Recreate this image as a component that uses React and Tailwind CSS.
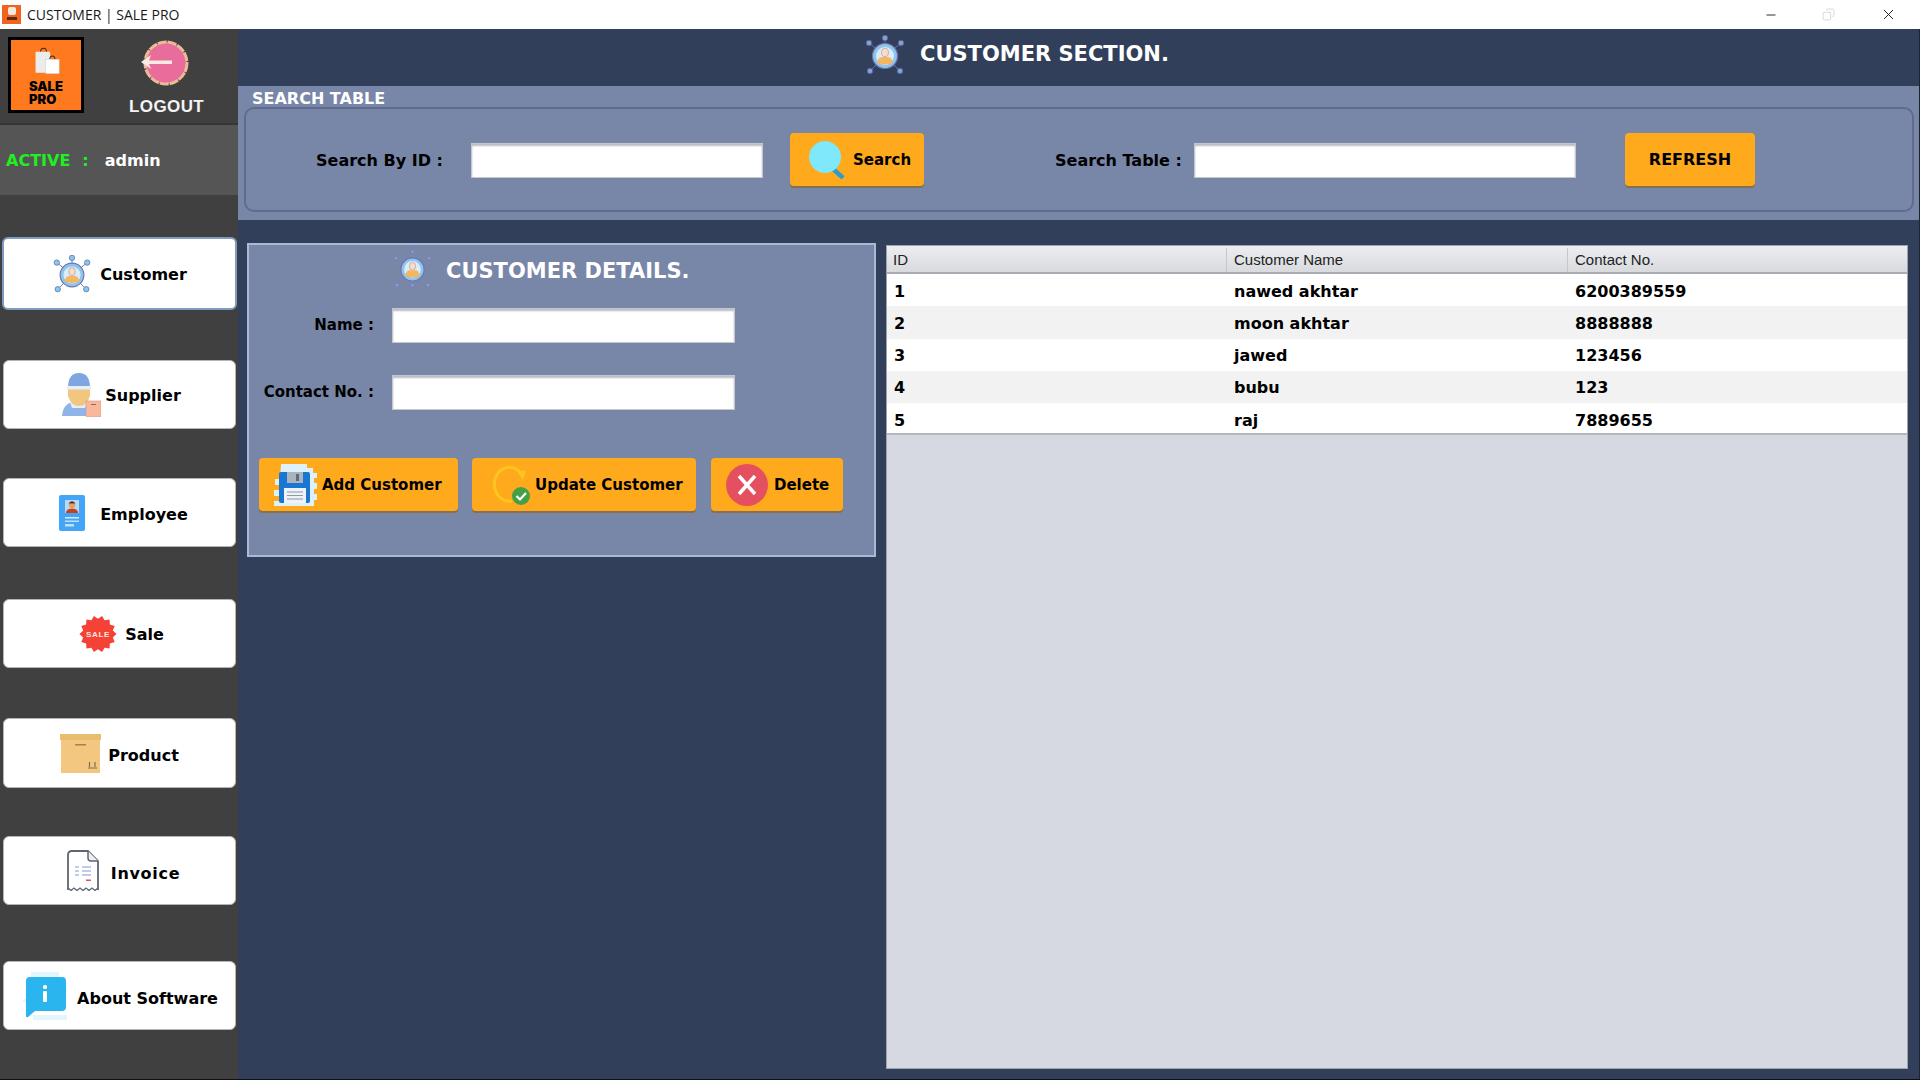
import { Minus, Copy, X } from 'lucide-react';

const ROWS = [
  { id: '1', name: 'nawed akhtar', contact: '6200389559' },
  { id: '2', name: 'moon akhtar', contact: '8888888' },
  { id: '3', name: 'jawed', contact: '123456' },
  { id: '4', name: 'bubu', contact: '123' },
  { id: '5', name: 'raj', contact: '7889655' },
];

const burst = Array.from({ length: 28 }, (_, i) => {
  const r = i % 2 ? 16 : 19.5;
  const a = (i / 28) * Math.PI * 2;
  return `${(20 + r * Math.cos(a)).toFixed(1)},${(20 + r * Math.sin(a)).toFixed(1)}`;
}).join(' ');

function HubIcon({ className, lines = true, dot = '#8ec5ea', edge = '#5e86b8' }) {
  const sats = lines
    ? [[20, 3], [4, 8], [36, 8], [5, 36], [35, 36]]
    : [[20, 2], [2, 9], [38, 9], [3, 38], [37, 38], [20, 38]];
  return (
    <svg viewBox="0 0 40 40" className={className}>
      {lines && sats.map(([x, y]) => <line key={x} x1="20" y1="21" x2={x} y2={y} stroke="#6d6db5" strokeWidth="1" />)}
      {sats.map(([x, y]) => <circle key={x} cx={x} cy={y} r={lines ? 2.8 : 1.6} fill={dot} stroke={edge} strokeWidth={lines ? 1 : 0.4} />)}
      <circle cx="20" cy="21" r="12.5" fill="#8ec5ea" stroke="#6f72b5" strokeWidth="1.2" />
      <circle cx="20" cy="21" r="9" fill="#d9ecf9" />
      <ellipse cx="20" cy="17.5" rx="3.4" ry="4.2" fill="#f8dcc9" stroke="#a77" strokeWidth="0.5" />
      <path d="M12.5 28 q0-6 5-6 l5 0 q5 0 5 6 q-7.500 3-15 0z" fill="#f4b75f" />
    </svg>
  );
}

function SupplierIcon() {
  return (
    <svg viewBox="0 0 40 45" className="w-[40px] h-[45px]">
      <path d="M1 44 q1-13 12-14 l10 0 q8 1 10 14z" fill="#8fb5e8" />
      <path d="M9 30 h17 l-2 6 h-13z" fill="#e4effb" />
      <path d="M7 17 h22 v7 q-3 10-11 10 q-8 0-11-10z" fill="#f1c67f" />
      <path d="M7 16 q0-15 11-15 q11 0 11 15z" fill="#7fa6e0" />
      <rect x="6" y="14" width="24" height="3.500" fill="#e4effb" />
      <rect x="25" y="29" width="15" height="15.500" fill="#f9b89c" stroke="#c99a80" strokeWidth="0.6" />
      <rect x="30" y="32" width="5" height="1" fill="#a8614a" />
    </svg>
  );
}

function EmployeeIcon() {
  return (
    <svg viewBox="0 0 27 36" className="w-[27px] h-[36px]">
      <rect width="26" height="36" rx="2" fill="#42a5f5" />
      <rect x="6" y="5" width="14" height="13" fill="#b6d9f7" />
      <circle cx="13" cy="10" r="3.200" fill="#e6a05a" />
      <path d="M9.500 8.500 q3.500-4.500 7 0z" fill="#4b3a34" />
      <path d="M7 18 q0-4.500 6-4.500 q6 0 6 4.500z" fill="#c9401f" />
      <rect x="6" y="22" width="14" height="1.500" fill="#d6ebfb" />
      <rect x="6" y="25.500" width="14" height="1.500" fill="#bfe0f9" />
      <rect x="6" y="29" width="9" height="2.500" fill="#bfe0f9" />
    </svg>
  );
}

function SaleIcon() {
  return (
    <svg viewBox="0 0 40 40" className="w-[38px] h-[38px]">
      <polygon points={burst} fill="#f44336" />
      <text x="20" y="23.500" textAnchor="middle" fontSize="8.500" fontFamily="Liberation Sans" fill="#ffe3df" letterSpacing="0.6">SALE</text>
    </svg>
  );
}

function BoxIcon() {
  return (
    <svg viewBox="0 0 41 39" className="w-[41px] h-[39px]">
      <rect x="1" y="5" width="39" height="34" fill="#f3c77f" />
      <rect width="41" height="6" fill="#eabc6e" />
      <rect x="15" y="10" width="11" height="1.500" fill="#a98246" />
      <path d="M28 34 h9 M29.500 33 v-5 M35 33 v-5" stroke="#7f6f50" strokeWidth="1.200" fill="none" />
    </svg>
  );
}

function InvoiceIcon() {
  return (
    <svg viewBox="0 0 32 41" className="w-[32px] h-[41px]">
      <path d="M1 40 V5 q0-4 4-4 H21 L31 11 V40" fill="#fff" stroke="#5f6672" strokeWidth="1.800" />
      <path d="M21 1 v7 q0 3 3 3 h7" fill="#eef0f3" stroke="#5f6672" strokeWidth="1.500" />
      <path d="M8 17 h4 M15 17 h9 M8 21 h4 M15 21 h9 M8 25 h4 M15 25 h9" stroke="#a9bedb" strokeWidth="1.500" />
      <rect x="19" y="29.500" width="5" height="1.500" fill="#e0526a" />
      <path d="M1 38 l3 2.500 3-2.500 3 2.500 3-2.500 3 2.500 3-2.500 3 2.500 3-2.500 3 2.500 3-2.500" fill="none" stroke="#5f6672" strokeWidth="1.300" />
    </svg>
  );
}

function AboutIcon() {
  return (
    <svg viewBox="0 0 48 50" className="w-[48px] h-[50px]">
      <rect x="2" y="28" width="6" height="3" fill="#e3f6fd" />
      <rect x="40" y="18" width="6" height="4" fill="#e3f6fd" />
      <rect x="10" y="1" width="28" height="5" fill="#e3f6fd" />
      <rect x="12" y="44" width="34" height="5" fill="#e3f6fd" />
      <path d="M5 10 q0-4 4-4 H41 q4 0 4 4 V36 q0 4-4 4 H14 L7 46 q-2 1-2-1z" fill="#2bb5ee" />
      <rect x="22" y="14" width="4" height="4" rx="1.500" fill="#fff" />
      <rect x="22" y="20" width="4" height="11" rx="1" fill="#fff" />
    </svg>
  );
}

function LogoutIcon() {
  return (
    <svg viewBox="0 0 50 46" className="w-[50px] h-[46px] mt-[3px] -ml-[3px]">
      <circle cx="26" cy="23" r="21" fill="#e96d9b" stroke="#e9bb97" strokeWidth="3" strokeDasharray="9 1" />
      <path d="M1 22 L11 15 L9 20.500 H32 V24 H9 L11 29z" fill="#fbe9e3" />
    </svg>
  );
}

function LogoMark() {
  return (
    <div className="w-[76px] h-[76px] shrink-0 bg-[#ff7a1f] border-[3px] border-black pl-[18px] pt-[7px]">
      <svg viewBox="0 0 32 32" className="w-[27px] h-[28px] ml-[4px]">
        <path d="M9 5 q0-4 3.500-4 q3.500 0 3.500 4" fill="none" stroke="#3a2a1a" strokeWidth="1.200" />
        <path d="M3 5 h17 l3 25 h-20z" fill="#ececec" />
        <path d="M20 14 q0-4 3-4 q3 0 3 4" fill="none" stroke="#3a2a1a" strokeWidth="1.200" />
        <rect x="15" y="14" width="16" height="17" fill="#fff" stroke="#c8c8c8" strokeWidth="0.500" />
      </svg>
      <p className="mt-[5px] text-[13px] leading-[13px] font-black text-black font-['Inter']">SALE</p>
      <p className="text-[13px] leading-[13px] font-black text-black font-['Inter']">PRO</p>
    </div>
  );
}

function SearchIcon() {
  return (
    <svg viewBox="0 0 38 38" className="w-[38px] h-[38px] shrink-0">
      <path d="M24 26 L36 37" stroke="#2e9ccc" strokeWidth="4.500" />
      <circle cx="18" cy="16" r="16" fill="#7fe8fb" />
    </svg>
  );
}

function FloppyIcon() {
  return (
    <svg viewBox="0 0 44 42" className="w-[44px] h-[42px] shrink-0">
      <path d="M8 0 h26 v4 h6 v5 h4 v5 h-3 v5 h3 v6 h-3 v5 h3 v6 h-3 v7 H1 v-6 h6 v-5 H1 v-6 h6 v-5 H2 v-6 h5z" fill="#ddf1fa" />
      <rect x="6" y="8" width="31" height="31" rx="2" fill="#1976d2" />
      <rect x="14" y="8" width="16" height="11" fill="#a9b4bd" />
      <rect x="23" y="10" width="3" height="7" fill="#5f6b75" />
      <rect x="11" y="24" width="22" height="15" fill="#edf3f7" />
      <path d="M14 28 h16 M14 31.500 h16 M14 35 h16" stroke="#8d9aa6" strokeWidth="1.200" />
    </svg>
  );
}

function UpdateIcon() {
  return (
    <svg viewBox="0 0 40 40" className="w-[40px] h-[40px] shrink-0">
      <path d="M32 10 A15 17 0 1 0 22 36" fill="none" stroke="#ffc51f" strokeWidth="3" />
      <path d="M26 5 L36 6 L33 15z" fill="#ffc51f" />
      <circle cx="31" cy="31" r="9" fill="#43a047" />
      <path d="M26.500 31 l3.500 3.500 l6-6.500" fill="none" stroke="#fff" strokeWidth="2.200" />
    </svg>
  );
}

function DeleteIcon() {
  return (
    <svg viewBox="0 0 42 42" className="w-[42px] h-[42px] shrink-0">
      <circle cx="21" cy="21" r="21" fill="#e4505f" />
      <path d="M13 12 L29 30 M29 12 L13 30" stroke="#fff" strokeWidth="3.500" />
    </svg>
  );
}

function SideButton({ icon, label, active, mt, gap, size = 'h-[69px]', text = 'pt-[3px]' }) {
  return (
    <button
      className={`${mt} ${gap} ${active ? 'ml-[2px] w-[235px] h-[73px] border-2 border-[#7d9cc0]' : `ml-[3px] w-[233px] ${size} border border-[#b4b4b4]`} flex items-center justify-center rounded-[6px] bg-white text-[16px] font-bold text-black`}
    >
      {icon}
      <span className={text}>{label}</span>
    </button>
  );
}

function OrangeButton({ className, children }) {
  return (
    <button className={`${className} flex items-center rounded-[4px] bg-[#ffa91c] shadow-[0_2px_0_#86714f] font-bold text-black`}>
      {children}
    </button>
  );
}

const FIELD = 'bg-white border border-[#c4c7cf] shadow-[inset_0_2px_2px_#b9bcc4] outline-none';

export default function App() {
  return (
    <div className="w-[1920px] h-[1080px] overflow-hidden flex flex-col bg-white font-['DejaVu_Sans',sans-serif]">
      {/* Title bar */}
      <div className="h-[29px] shrink-0 flex items-center bg-white">
        <div className="ml-[2px] w-[19px] h-[19px] bg-[#f0641e] flex flex-col items-center pt-[2px]">
          <div className="w-[8px] h-[8px] bg-[#f5e9df] rounded-[2px]" />
          <div className="w-[10px] h-[3px] mt-[2px] bg-[#5a2a10]" />
        </div>
        <span className="ml-[6px] text-[14px] text-[#1a1a1a] font-['Open_Sans',sans-serif]">CUSTOMER | SALE PRO</span>
        <div className="ml-auto flex items-center">
          <Minus className="w-[14px] h-[14px] text-[#111] mr-[44px]" strokeWidth={1.500} />
          <Copy className="w-[13px] h-[13px] text-[#c8c8c8] mr-[45px] -scale-x-100" strokeWidth={1.300} />
          <X className="w-[17px] h-[17px] text-[#111] mr-[23px]" strokeWidth={1.300} />
        </div>
      </div>

      <div className="flex-1 flex min-h-0 border-b border-[#111]">
        {/* Sidebar */}
        <aside className="w-[238px] shrink-0 flex flex-col bg-[#404040]">
          <div className="h-[96px] flex border-b-2 border-[#363636] pt-[8px] pl-[8px]">
            <LogoMark />
            <div className="ml-[45px] flex flex-col items-center">
              <LogoutIcon />
              <span className="mt-[11px] text-[17px] leading-[20px] font-bold text-[#f4f4f4] font-['Liberation_Sans',sans-serif] tracking-[0.4px]">LOGOUT</span>
            </div>
          </div>
          <div className="h-[70px] bg-[#555555] flex items-center pl-[6px] pt-[2px] text-[16px] font-bold">
            <span className="text-[#1ff01f]">ACTIVE</span>
            <span className="ml-[12px] text-[#1ff01f]">:</span>
            <span className="ml-[16px] text-white">admin</span>
          </div>
          <SideButton mt="mt-[42px]" gap="gap-[9px] pl-[1px]" active icon={<HubIcon className="w-[38px] h-[38px]" />} label="Customer" />
          <SideButton mt="mt-[50px]" gap="gap-[4px] pl-[3px]" icon={<SupplierIcon />} label="Supplier" />
          <SideButton mt="mt-[49px]" gap="gap-[14px] pl-[8px]" text="pt-[5px]" icon={<EmployeeIcon />} label="Employee" />
          <SideButton mt="mt-[52px]" gap="gap-[8px] pl-[4px]" icon={<SaleIcon />} label="Sale" />
          <SideButton mt="mt-[50px]" gap="gap-[7px]" size="h-[70px]" text="pt-[5px]" icon={<BoxIcon />} label="Product" />
          <SideButton mt="mt-[48px]" gap="gap-[12px] pl-[8px]" text="pt-[6px] tracking-[0.7px]" icon={<InvoiceIcon />} label="Invoice" />
          <SideButton mt="mt-[56px]" gap="gap-[8px]" text="pt-[6px]" icon={<AboutIcon />} label="About Software" />
        </aside>

        {/* Main */}
        <main className="flex-1 min-w-0 flex flex-col bg-[#323f5a] border-r border-[#1c2333]">
          <header className="h-[57px] shrink-0 flex items-center pl-[627px] pb-[5px]">
            <HubIcon className="w-[40px] h-[40px]" dot="#7fa6d0" edge="#5b5f9a" />
            <h1 className="ml-[15px] text-[21px] font-bold text-white">CUSTOMER SECTION.</h1>
          </header>

          <section className="h-[134px] shrink-0 bg-[#7886a8]">
            <h2 className="h-[21px] pl-[14px] pt-[3px] text-[16px] leading-[20px] font-bold text-white">SEARCH TABLE</h2>
            <div className="ml-[6px] mr-[5px] h-[105px] border-2 border-[#5f6c8e] rounded-[10px] flex items-center text-[16px] font-bold text-black">
              <span className="ml-[70px] w-[155px] pt-[2px]">Search By ID :</span>
              <input className={`${FIELD} w-[292px] h-[35px] mt-[2px]`} />
              <OrangeButton className="ml-[27px] w-[134px] h-[53px] pl-[17px] gap-[8px] text-[15px]">
                <SearchIcon />
                <span className="pt-[2px]">Search</span>
              </OrangeButton>
              <span className="ml-[131px] w-[139px] pt-[2px]">Search Table :</span>
              <input className={`${FIELD} w-[382px] h-[35px] mt-[2px]`} />
              <OrangeButton className="ml-[49px] w-[130px] h-[53px] justify-center text-[16px]">REFRESH</OrangeButton>
            </div>
          </section>

          <div className="flex-1 min-h-0 flex items-start pt-[23px]">
            {/* Details form */}
            <section className="ml-[9px] w-[629px] h-[314px] shrink-0 bg-[#7886a8] border-2 border-[#aab9da] text-[15px] font-bold text-black">
              <div className="h-[54px] mb-[8px] flex items-center pl-[145px]">
                <HubIcon className="w-[37px] h-[37px] -mt-[7px]" lines={false} dot="#9b9be0" edge="#7474b8" />
                <h2 className="ml-[15px] text-[21px] font-bold text-white">CUSTOMER DETAILS.</h2>
              </div>
              <div className="flex items-center h-[36px]">
                <span className="w-[125px] text-right">Name :</span>
                <input className={`${FIELD} ml-[18px] w-[343px] h-[35px]`} />
              </div>
              <div className="flex items-center h-[36px] mt-[31px]">
                <span className="w-[125px] text-right whitespace-nowrap">Contact No. :</span>
                <input className={`${FIELD} ml-[18px] w-[343px] h-[35px]`} />
              </div>
              <div className="flex mt-[48px] ml-[10px]">
                <OrangeButton className="w-[199px] h-[53px] pl-[14px] gap-[5px]">
                  <FloppyIcon />
                  <span className="pt-[2px]">Add Customer</span>
                </OrangeButton>
                <OrangeButton className="ml-[14px] w-[224px] h-[53px] pl-[18px] gap-[5px]">
                  <UpdateIcon />
                  <span className="pt-[2px]">Update Customer</span>
                </OrangeButton>
                <OrangeButton className="ml-[15px] w-[132px] h-[53px] pl-[15px] gap-[6px]">
                  <DeleteIcon />
                  <span className="pt-[2px]">Delete</span>
                </OrangeButton>
              </div>
            </section>

            {/* Customer table */}
            <section className="ml-[10px] w-[1022px] h-[824px] shrink-0 bg-[#d6d9e1] border border-[#9ea3ad] mt-[2px]">
              <div className="grid grid-cols-[340px_341px_1fr] h-[28px] pt-[2px] bg-gradient-to-b from-[#eceef1] to-[#d8dade] border-b-2 border-[#a9acb3] text-[15px] text-[#222] font-['Liberation_Sans',sans-serif]">
                <div className="pl-[6px] flex items-center border-r border-[#c4c7cd]">ID</div>
                <div className="pl-[7px] flex items-center border-r border-[#c4c7cd]">Customer Name</div>
                <div className="pl-[7px] flex items-center">Contact No.</div>
              </div>
              <div className="border-b-2 border-[#b4b7bd]">
                {ROWS.map((r, i) => (
                  <div
                    key={r.id}
                    className={`grid grid-cols-[340px_341px_1fr] h-[32.250px] last:h-[30px] pt-[3px] last:pt-[6px] items-center text-[16px] font-bold text-black ${i % 2 ? 'bg-[#f2f2f2]' : 'bg-white'}`}
                  >
                    <div className="pl-[7px]">{r.id}</div>
                    <div className="pl-[7px]">{r.name}</div>
                    <div className="pl-[7px]">{r.contact}</div>
                  </div>
                ))}
              </div>
            </section>
          </div>
        </main>
      </div>
    </div>
  );
}
